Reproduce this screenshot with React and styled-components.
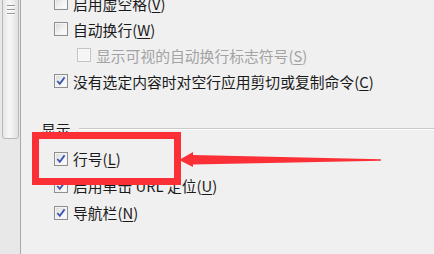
import React from "react";
import styled, { createGlobalStyle } from "styled-components";

const GlobalStyle = createGlobalStyle`
    html, body {
        margin: 0;
        padding: 0;
        background: #f0f0f0;
        overflow: hidden;
    }
    body {
        font-family: "Noto Sans CJK SC", "Noto Sans", sans-serif;
    }
`;

const Page = styled.div`
    position: relative;
    width: 434px;
    height: 254px;
    display: flex;
    background: #f0f0f0;
    overflow: hidden;
`;

const ScrollTrack = styled.div`
    width: 21px;
    flex-shrink: 0;
    background: #e8e8e8;
    border-right: 1px solid #a9a9a9;
    padding: 0 1px 0 2px;
    box-sizing: border-box;
`;

const ScrollThumb = styled.div`
    height: 143px;
    margin-top: -4px;
    border: 1px solid #b8b8b8;
    border-radius: 3px;
    background: linear-gradient(to right, #e6e6e6, #f7f7f7 45%, #e0e0e0);
    display: flex;
    flex-direction: column;
    align-items: center;
    gap: 2px;
    padding-top: 8px;
    box-sizing: border-box;
`;

const Grip = styled.span`
    width: 8px;
    height: 1px;
    background: #9a9a9a;
    border-bottom: 1px solid #fafafa;
`;

const Content = styled.div`
    flex: 1;
    display: flex;
    flex-direction: column;
    margin-top: -10px;
    padding-left: 33px;
`;

const Row = styled.div`
    height: ${(p) => p.$h || 26}px;
    display: flex;
    align-items: center;
    gap: 5px;
    padding-left: ${(p) => (p.$indent ? 23 : 0)}px;
    font-size: 14.8px;
    color: ${(p) => (p.$disabled ? "#a3a3a3" : "#1a1a1a")};
    white-space: nowrap;
`;

const Box = styled.span`
    width: 14px;
    height: 14px;
    flex-shrink: 0;
    box-sizing: border-box;
    border: 1px solid ${(p) => (p.$disabled ? "#c4c4c4" : "#8e8f8f")};
    background: ${(p) =>
        p.$disabled
            ? "#f5f5f5"
            : "linear-gradient(135deg, #d8d8d8, #f4f4f4 60%, #ffffff)"};
    box-shadow: inset 0 0 0 1px ${(p) => (p.$disabled ? "#f8f8f8" : "#f4f4f4")};
    display: flex;
    align-items: center;
    justify-content: center;
`;

const Key = styled.span`
    text-decoration: underline;
    text-underline-offset: 2px;
`;

const GroupHeader = styled.div`
    display: flex;
    align-items: center;
    gap: 8px;
    height: 20px;
    margin: 25px 0 6px -13px;
    font-size: 14.8px;
    color: #1a1a1a;
`;

const GroupLine = styled.span`
    flex: 1;
    height: 1px;
    background: #c9c9c9;
    border-bottom: 1px solid #fff;
`;

const Highlight = styled.div`
    position: absolute;
    left: 32px;
    top: 132px;
    width: 149px;
    height: 53px;
    box-sizing: border-box;
    border: 7px solid #fb2f36;
`;

const ArrowSvg = styled.svg`
    position: absolute;
    left: 0;
    top: 0;
    pointer-events: none;
`;

const Check = () => (
    <svg width="12" height="12" viewBox="0 0 12 12">
        <path d="M2.3 6 L4.8 8.8 L9.6 2.4" fill="none" stroke="#3a55b0" strokeWidth="1.8" />
    </svg>
);

const Option = ({ checked, disabled, indent, h, label, keyChar }) => (
    <Row $disabled={disabled} $indent={indent} $h={h}>
        <Box $disabled={disabled}>{checked && <Check />}</Box>
        <span>
            {label}(<Key>{keyChar}</Key>)
        </span>
    </Row>
);

export default function App() {
    return (
        <>
            <GlobalStyle />
            <Page>
                <ScrollTrack>
                    <ScrollThumb>
                        <Grip />
                        <Grip />
                        <Grip />
                    </ScrollThumb>
                </ScrollTrack>
                <Content>
                    <Option label="启用虚空格" keyChar="V" />
                    <Option label="自动换行" keyChar="W" />
                    <Option label="显示可视的自动换行标志符号" keyChar="S" disabled indent />
                    <Option label="没有选定内容时对空行应用剪切或复制命令" keyChar="C" checked />
                    <GroupHeader>
                        <span>显示</span>
                        <GroupLine />
                    </GroupHeader>
                    <Option label="行号" keyChar="L" checked h={27} />
                    <Option label="启用单击 URL 定位" keyChar="U" checked h={27} />
                    <Option label="导航栏" keyChar="N" checked h={27} />
                </Content>
                <Highlight />
                <ArrowSvg width="434" height="254">
                    <polygon
                        points="179,160 193,152 193,155 381,159.3 381,160.8 193,164.5 193,167"
                        fill="#fb2f36"
                    />
                </ArrowSvg>
            </Page>
        </>
    );
}
